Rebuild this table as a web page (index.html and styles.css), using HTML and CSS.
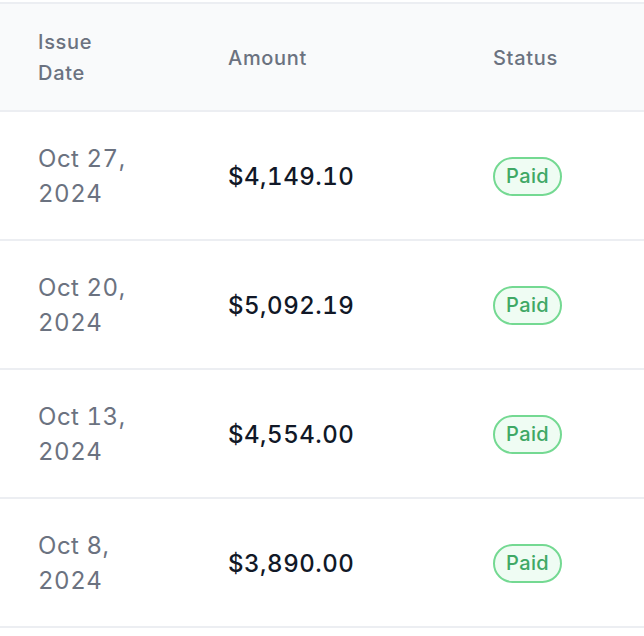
FILE: index.html
```html
<!DOCTYPE html>
<html>
<head>
<meta charset="utf-8">
<link rel="stylesheet" href="styles.css">
</head>
<body>
<table class="invoices">
  <thead>
    <tr>
      <th class="col-date">Issue<br>Date</th>
      <th class="col-amount">Amount</th>
      <th class="col-status">Status</th>
    </tr>
  </thead>
  <tbody>
    <tr>
      <td class="date">Oct 27,<br>2024</td>
      <td class="amount">$4,149.10</td>
      <td class="status"><span class="badge">Paid</span></td>
    </tr>
    <tr>
      <td class="date">Oct 20,<br>2024</td>
      <td class="amount">$5,092.19</td>
      <td class="status"><span class="badge">Paid</span></td>
    </tr>
    <tr>
      <td class="date">Oct 13,<br>2024</td>
      <td class="amount">$4,554.00</td>
      <td class="status"><span class="badge">Paid</span></td>
    </tr>
    <tr>
      <td class="date">Oct 8,<br>2024</td>
      <td class="amount">$3,890.00</td>
      <td class="status"><span class="badge">Paid</span></td>
    </tr>
  </tbody>
</table>
</body>
</html>
```
FILE: styles.css
```css
html, body {
  margin: 0;
  padding: 0;
  background: #ffffff;
}
body {
  padding-top: 2px;
  font-family: Inter, "Liberation Sans", sans-serif;
  font-variant-numeric: tabular-nums;
}
.invoices {
  border-collapse: collapse;
  width: 644px;
  table-layout: fixed;
  border-top: 2px solid #eceef2;
}
.invoices th,
.invoices td {
  box-sizing: border-box;
}
.invoices th {
  background: #f9fafb;
  color: #6b7280;
  font-weight: 500;
  font-size: 20px;
  line-height: 31px;
  letter-spacing: 0.035em;
  text-align: left;
  padding: 23px 0 21px 38px;
  border-bottom: 2px solid #eceef2;
  vertical-align: middle;
}
.col-date { width: 190px; }
.col-amount { width: 265px; }
.invoices td {
  padding: 29px 0 28px 38px;
  border-bottom: 2px solid #eceef2;
  vertical-align: middle;
  font-size: 24px;
  line-height: 35px;
  letter-spacing: 0.022em;
}
.date {
  color: #6b7280;
}
.amount {
  color: #111827;
  font-weight: 500;
}
.badge {
  display: inline-block;
  padding: 1px 11px 2px;
  border: 2px solid #74d992;
  border-radius: 999px;
  background: #effcf3;
  color: #40a865;
  font-size: 20px;
  line-height: 32px;
  font-weight: 500;
  letter-spacing: 0.02em;
}
```
